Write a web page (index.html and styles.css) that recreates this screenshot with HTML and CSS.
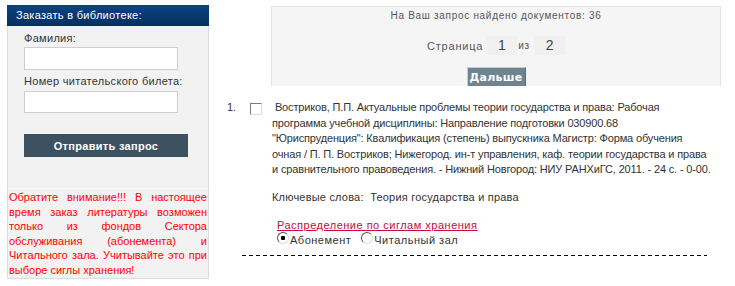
FILE: index.html
```html
<!DOCTYPE html>
<html lang="ru">
<head>
    <meta charset="utf-8">
    <title>Заказ литературы</title>
    <link rel="stylesheet" href="styles.css">
</head>
<body>
    <div class="page">
        <aside class="order">
            <div class="order-head">Заказать в библиотеке:</div>
            <form class="order-form">
                <label for="surname" class="first">Фамилия:</label>
                <input type="text" id="surname" class="surname">
                <label for="ticket">Номер читательского билета:</label>
                <input type="text" id="ticket" class="ticket">
                <button type="button" class="send">Отправить запрос</button>
            </form>
            <p class="note">Обратите внимание!!! В настоящее время заказ литературы возможен только из фондов Сектора обслуживания (абонемента) и Читального зала. Учитывайте это при выборе сиглы хранения!</p>
        </aside>

        <main class="results">
            <div class="pager">
                <div class="found">На Ваш запрос найдено документов: 36</div>
                <div class="pages">
                    <span class="pages-label">Страница</span>
                    <span class="page-num">1</span>
                    <span class="pages-of">из</span>
                    <span class="page-num">2</span>
                </div>
                <button type="button" class="next">Дальше</button>
            </div>

            <div class="record">
                <span class="record-num">1.</span>
                <input type="checkbox" class="record-check">
                <div class="record-body">
                    <p class="descr">&nbsp;Востриков, П.П. Актуальные проблемы теории государства и права: Рабочая<br>программа учебной дисциплины: Направление подготовки 030900.68<br>"Юриспруденция": Квалификация (степень) выпускника Магистр: Форма обучения<br>очная / П. П. Востриков; Нижегород. ин-т управления, каф. теории государства и права<br>и сравнительного правоведения. - Нижний Новгород: НИУ РАНХиГС, 2011. - 24 с. - 0-00.</p>
                    <p class="keywords">Ключевые слова:&nbsp; Теория государства и права</p>
                    <div class="storage">
                        <a href="#" class="storage-link">Распределение по сиглам хранения</a>
                        <div class="storage-opts">
                            <label class="opt"><input type="radio" name="sigla" checked>Абонемент</label>
                            <label class="opt"><input type="radio" name="sigla">Читальный зал</label>
                        </div>
                    </div>
                </div>
            </div>
            <div class="divider"></div>
        </main>
    </div>
</body>
</html>
```

FILE: styles.css
```css
body {
    margin: 0;
    background-color: #fff;
    font-family: "Liberation Sans", Arial, sans-serif;
    font-size: 11px;
    color: #333;
}

.page {
    display: flex;
    align-items: flex-start;
    padding: 5px 0 0 7px;
}

/* left column: order form */
.order {
    width: 202px;
    flex-shrink: 0;
}

.order-head {
    height: 21px;
    line-height: 21px;
    padding-left: 9px;
    color: #fff;
    letter-spacing: 0.3px;
    background: linear-gradient(#0d4284, #072f5e);
}

.order-form,
.note {
    background-color: #f2f2f2;
    border-left: 1px solid #dcdcdc;
    border-right: 1px solid #dcdcdc;
}

.order-form {
    display: flex;
    flex-direction: column;
    align-items: flex-start;
    padding: 0 0 31px 16px;
    margin: 0;
}

.order-form label {
    display: block;
    line-height: 13px;
    margin-top: 5px;
    letter-spacing: 0.3px;
}

.order-form label.first {
    margin-top: 6px;
}

.order-form input {
    width: 154px;
    height: 23px;
    margin: 2px 0 0;
    padding: 0 3px;
    border: 1px solid #cfcfcf;
    background-color: #fff;
    box-sizing: border-box;
}

.order-form input.ticket {
    height: 22px;
    margin-top: 3px;
}

.send {
    width: 164px;
    height: 23px;
    margin-top: 21px;
    border: none;
    background-color: #3d5261;
    color: #fff;
    font-family: inherit;
    font-size: 11px;
    font-weight: bold;
    letter-spacing: 0.3px;
}

.note {
    margin: 0;
    padding: 1px 1px 0 1px;
    border-top: 1px solid #fafafa;
    border-bottom: 1px solid #dcdcdc;
    color: #f00;
    line-height: 14.6px;
    text-align: justify;
}

/* right column: results */
.results {
    margin-left: 11px;
    width: 501px;
}

.pager {
    margin: 1px 0 0 51px;
    width: 450px;
    height: 80px;
    box-sizing: border-box;
    border: 1px solid #e4e4e4;
    border-bottom-width: 0;
    background-color: #f5f5f5;
    display: flex;
    flex-direction: column;
    align-items: center;
    color: #555;
}

.found {
    margin-top: 3px;
    font-size: 10px;
    line-height: 12px;
    letter-spacing: 0.7px;
}

.pages {
    display: flex;
    align-items: center;
    margin-top: 14px;
    font-size: 11px;
    letter-spacing: 0.8px;
}

.pages-label {
    margin-right: 4px;
}

.page-num {
    width: 30px;
    height: 19px;
    line-height: 19px;
    text-align: center;
    background-color: #f0f0f0;
    font-size: 14px;
    color: #444;
}

.pages-of {
    margin: 0 5px 0 1px;
    font-size: 10px;
}

.next {
    margin-top: 12px;
    width: 59px;
    height: 22px;
    padding: 0;
    border: 1px solid #c6cdd1;
    border-right-color: #5a6c77;
    border-bottom: none;
    background-color: #6e8491;
    color: #fff;
    font-family: "DejaVu Sans", sans-serif;
    font-size: 11px;
    font-weight: bold;
    letter-spacing: 0.3px;
}

.record {
    display: flex;
    align-items: flex-start;
    margin-top: 14px;
    padding-left: 7px;
}

.record-num {
    width: 23px;
    line-height: 15.5px;
}

.record-check {
    appearance: none;
    width: 12px;
    height: 12px;
    margin: 3px 0 0;
    border: 1px solid;
    border-color: #7a7a7a #dcdcdc #dcdcdc #7a7a7a;
    background-color: #fff;
}

.record-body {
    margin-left: 10px;
    width: 440px;
}

.record-body p {
    margin: 0;
    line-height: 15.5px;
    letter-spacing: -0.15px;
    white-space: nowrap;
}

.record-body .keywords {
    margin-top: 12.5px;
    letter-spacing: 0.2px;
}

.storage {
    margin: 13px 0 0 5px;
}

.storage-link {
    color: #c8093a;
    line-height: 12px;
    letter-spacing: 0.5px;
}

.storage-opts {
    display: flex;
    margin-top: 1px;
}

.opt {
    display: flex;
    align-items: flex-start;
    margin-right: 10px;
    letter-spacing: 0.5px;
    padding-top: 2px;
}

.opt input {
    appearance: none;
    width: 12px;
    height: 12px;
    margin: -2px 1px 0 0;
    border-radius: 50%;
    border: 1px solid;
    border-color: #555 #ddd #ddd #555;
    background-color: #fff;
}

.opt input:checked {
    background: radial-gradient(circle, #000 2px, #fff 2.5px);
}

.divider {
    margin: 9px 0 0 22px;
    width: 465px;
    height: 1px;
    background: repeating-linear-gradient(90deg, #000 0 4px, transparent 4px 7px);
}
```
